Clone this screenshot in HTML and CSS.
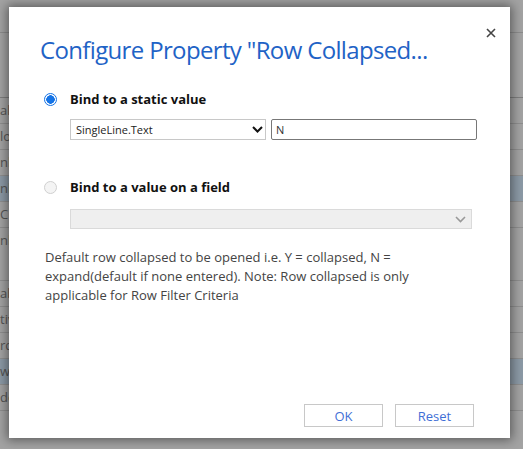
FILE: index.html
```html
<!DOCTYPE html>
<html>
<head>
<meta charset="utf-8">
<link rel="stylesheet" href="styles.css">
</head>
<body>
<div class="page">
  <div class="toolbar"></div>
  <div class="list">
    <div class="row"><span class="frag">al</span></div>
    <div class="row"><span class="frag">lo</span></div>
    <div class="row"><span class="frag">nb</span></div>
    <div class="row sel"><span class="frag">nb</span></div>
    <div class="row"><span class="frag">C</span></div>
    <div class="row tall"><span class="frag">nb</span></div>
    <div class="row"><span class="frag">ab</span></div>
    <div class="row"><span class="frag">tiv</span></div>
    <div class="row"><span class="frag">rd</span></div>
    <div class="row sel"><span class="frag">w</span></div>
    <div class="row"><span class="frag">de</span></div>
  </div>
</div>

<div class="dialog">
  <button class="close" aria-label="Close">
    <svg width="10" height="10" viewBox="0 0 10 10"><path d="M1 1L9 9M9 1L1 9" stroke="#444" stroke-width="1.6"/></svg>
  </button>
  <h1 class="title">Configure Property "Row Collapsed...</h1>

  <div class="option">
    <span class="radio on"></span>
    <span class="label">Bind to a static value</span>
  </div>
  <div class="controls">
    <div class="select">
      <span>SingleLine.Text</span>
      <svg class="chev" width="11" height="7" viewBox="0 0 11 7"><path d="M1 1L5.5 5.5L10 1" fill="none" stroke="#111" stroke-width="2"/></svg>
    </div>
    <div class="input">N</div>
  </div>

  <div class="option second">
    <span class="radio"></span>
    <span class="label">Bind to a value on a field</span>
  </div>
  <div class="controls lower">
    <div class="select disabled">
      <span></span>
      <svg class="chev" width="11" height="7" viewBox="0 0 11 7"><path d="M1 1L5.5 5.5L10 1" fill="none" stroke="#999" stroke-width="1.6"/></svg>
    </div>
  </div>

  <p class="desc">Default row collapsed to be opened i.e. Y = collapsed, N = expand(default if none entered). Note: Row collapsed is only applicable for Row Filter Criteria</p>

  <div class="footer">
    <button class="btn">OK</button>
    <button class="btn">Reset</button>
  </div>
</div>
</body>
</html>
```

FILE: styles.css
```css
html, body {
  margin: 0;
  padding: 0;
}
body {
  width: 523px;
  height: 449px;
  overflow: hidden;
  background: #a3a3a3;
  font-family: "Open Sans", "Noto Sans", sans-serif;
  position: relative;
}
.page {
  height: 449px;
}
.toolbar {
  height: 32px;
  border-bottom: 1px solid #8c8c8c;
}
.list {
  margin-top: 64px;
  border-top: 1px solid #7e7e7e;
}
.row {
  height: 25px;
  border-bottom: 1px solid #8e8e8e;
  font-family: "Open Sans", sans-serif;
  font-size: 13px;
  color: #555;
  line-height: 25px;
}
.row.sel {
  background: #8c9aa6;
}
.row.tall {
  height: 52px;
}
.frag {
  display: block;
}

.dialog {
  position: absolute;
  left: 9px;
  top: 7px;
  width: 501px;
  height: 431px;
  background: #fff;
  box-shadow: 0 0 10px 2px rgba(0,0,0,0.45);
  display: flex;
  flex-direction: column;
  box-sizing: border-box;
}
.close {
  position: absolute;
  top: 17px;
  right: 12px;
  width: 14px;
  height: 14px;
  padding: 2px;
  border: 0;
  background: none;
}
.title {
  margin: 27px 0 0 31px;
  font-size: 24px;
  font-weight: 400;
  color: #1f63c6;
  line-height: 32px;
  letter-spacing: -0.65px;
}
.option {
  display: flex;
  align-items: center;
  margin: 25px 0 0 35px;
  height: 16px;
}
.option.second {
  margin-top: 39px;
}
.radio {
  width: 13px;
  height: 13px;
  border-radius: 50%;
  border: 1px solid #d0d0d0;
  background: #f4f4f4;
  box-sizing: border-box;
  margin-right: 13px;
}
.radio.on {
  border: 1.5px solid #1473e6;
  background: radial-gradient(circle, #1473e6 0 4px, #fff 4.5px);
}
.label {
  font-size: 13px;
  font-weight: 700;
  color: #111;
}
.controls {
  display: flex;
  gap: 5px;
  margin: 12px 0 0 61px;
}
.controls.lower {
  margin-top: 14px;
}
.select {
  width: 196px;
  height: 21px;
  border: 1px solid #c8c8c8;
  box-sizing: border-box;
  display: flex;
  align-items: center;
  justify-content: space-between;
  padding: 0 2px 0 5px;
  font-size: 11px;
  color: #222;
}
.select.disabled {
  width: 402px;
  height: 20px;
  background: #efefef;
  border-color: #dadada;
  padding-right: 5px;
}
.input {
  width: 206px;
  height: 21px;
  border: 1px solid #777;
  border-radius: 2px;
  box-sizing: border-box;
  padding-left: 4px;
  font-size: 11px;
  line-height: 19px;
  color: #333;
}
.desc {
  margin: 19px 0 0 36px;
  width: 376px;
  font-size: 13px;
  line-height: 19px;
  color: #444;
}
.footer {
  margin-top: auto;
  margin-bottom: 11px;
  display: flex;
  justify-content: flex-end;
  gap: 12px;
  padding-right: 36px;
}
.btn {
  width: 79px;
  height: 23px;
  border: 1px solid #c8c8c8;
  background: #fff;
  font-family: "Open Sans", sans-serif;
  font-size: 13px;
  color: #3f6fd6;
  padding: 0;
}
```
